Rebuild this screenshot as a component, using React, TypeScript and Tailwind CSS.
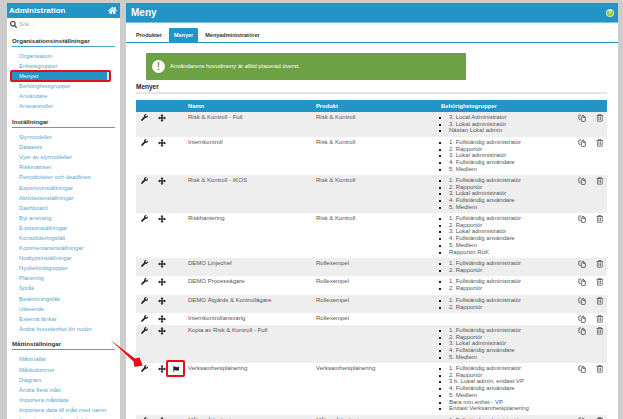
import { FaFlag, FaHome, FaRegTrashAlt, FaSearch, FaWrench } from "react-icons/fa";

const sections = [
  {
    title: "Organisationsinställningar",
    items: ["Organisation", "Enhetsgrupper", "Menyer", "Behörighetsgrupper", "Användare", "Ansvarsroller"],
  },
  {
    title: "Inställningar",
    items: [
      "Styrmodeller",
      "Datasets",
      "Vyer av styrmodeller",
      "Riskmatriser",
      "Periodiciteter och deadlines",
      "Exportvyinställningar",
      "Aktivitetsinställningar",
      "Dashboard",
      "Byt ansvarig",
      "E-postinställningar",
      "Konsolideringsfält",
      "Kommentarsinställningar",
      "Nodtypsinställningar",
      "Nyckelordsgrupper",
      "Planering",
      "Språk",
      "Beskrivningsfält",
      "Utseende",
      "Externa länkar",
      "Ändra huvudenhet för noder",
    ],
  },
  {
    title: "Måttinställningar",
    items: [
      "Måttmallar",
      "Måttkolumner",
      "Diagram",
      "Ändra flera mått",
      "Importera måttdata",
      "Importera data till mått med namn",
      "Importera periodiserad data",
    ],
  },
];

const five = [
  "1. Fullständig administratör",
  "2. Rapportör",
  "3. Lokal administratör",
  "4. Fullständig användare",
  "5. Medlem",
];
const two = ["1. Fullständig administratör", "2. Rapportör"];

const rows = [
  { name: "Risk & Kontroll - Full", product: "Risk & Kontroll", groups: ["3. Local Administrator", "3. Lokal administratör", "Nästan Lokal admin"], h: "h-[25px]" },
  { name: "Internkontroll", product: "Risk & Kontroll", groups: five, h: "h-[38px]" },
  { name: "Risk & Kontroll - IKOS", product: "Risk & Kontroll", groups: five, h: "h-[38px]" },
  { name: "Riskhantering", product: "Risk & Kontroll", groups: [...five, "Rapportör RoK"], h: "h-[45px]" },
  { name: "DEMO Linjechef", product: "Rollexempel", groups: two, h: "h-[18px]" },
  { name: "DEMO Processägare", product: "Rollexempel", groups: two, h: "h-[19px]" },
  { name: "DEMO Åtgärds & Kontrollägare", product: "Rollexempel", groups: two, h: "h-[18px]" },
  { name: "Internkontrollansvarig", product: "Rollexempel", groups: [], h: "h-[12px]" },
  { name: "Kopia av Risk & Kontroll - Full", product: "", groups: five, h: "h-[38px]" },
  {
    name: "Verksamhetsplanering",
    product: "Verksamhetsplanering",
    groups: ["1. Fullständig administratör", "2. Rapportör", "3 b. Lokal admin, endast VP", "4. Fullständig användare", "5. Medlem", "Bara min enhet - VP", "Endast Verksamhetsplanering"],
    h: "h-[52px]",
    flag: true,
  },
  { name: "Målområdeskarta", product: "Målområdeskarta", groups: ["1. Fullständig administratör"], h: "h-[18px]" },
];

function MoveIcon() {
  return (
    <svg width="8" height="8" viewBox="0 0 8 8" className="shrink-0" fill="#111">
      <path d="M3.4 1.5h1.2v5H3.4z" />
      <path d="M1.5 3.4h5v1.2h-5z" />
      <path d="M4 0l1.5 1.8h-3zM4 8L2.5 6.2h3zM0 4l1.8-1.5v3zM8 4L6.2 5.5v-3z" />
    </svg>
  );
}

function CopyIcon() {
  return (
    <svg width="8" height="8" viewBox="0 0 8 8" fill="none" stroke="#444" strokeWidth="0.8">
      <path d="M3.2 1H1.4a.6.6 0 0 0-.6.6v3.2a.6.6 0 0 0 .6.6h1" />
      <path d="M3.3 3.2L4.9 1.2h.5l1.9 2v3.6a.6.6 0 0 1-.6.6H3.9a.6.6 0 0 1-.6-.6z" />
      <path d="M5 1.4v2h2" />
    </svg>
  );
}

function Sidebar() {
  return (
    <aside className="w-[113px] shrink-0 bg-white h-full overflow-hidden">
      <div className="h-[15px] bg-[#2394c6] flex items-center justify-between pl-[2px] pr-[3px] text-white">
        <span className="text-[8px] font-bold">Administration</span>
        <FaHome className="text-[9px]" />
      </div>
      <div className="h-[11px] mt-[1px] flex items-center gap-[2px] pl-[3px] text-[6px] text-[#aaa]">
        <FaSearch className="text-[7px] text-[#333]" />
        <span>Sök...</span>
      </div>
      {sections.map((section, i) => (
        <div key={section.title} className={i === 0 ? "mt-[6px]" : "mt-[5.5px]"}>
          <div className="mx-[5px] pb-[1px] border-b border-[#4ba3cf] text-[6.15px] leading-[9px] font-bold text-[#333]">
            {section.title}
          </div>
          <ul className="mt-[4px]">
            {section.items.map((item) => (
              <li
                key={item}
                className={`h-[10.1px] pl-[8px] ml-[4px] w-[98px] text-[5.85px] leading-[10px] whitespace-nowrap ${
                  item === "Menyer" ? "bg-[#2394c6] text-white border-r-2 border-[#cfe6f2]" : "text-[#5aa5cf]"
                }`}
              >
                {item}
              </li>
            ))}
          </ul>
        </div>
      ))}
    </aside>
  );
}

function MenuRow({ row, shaded }: { row: (typeof rows)[number]; shaded: boolean }) {
  return (
    <div className={`${row.h} shrink-0 grid grid-cols-[52px_128px_125px_137px_18px_1fr] pt-[2px] text-[6px] leading-[6.7px] text-[#555] ${shaded ? "bg-[#eeeeee]" : "bg-white"}`}>
      <div className="flex items-start pl-[5px] text-[#222]">
        <FaWrench className="text-[7px] shrink-0" />
        <div className="ml-[10px]">
          <MoveIcon />
        </div>
        {row.flag && <FaFlag className="text-[6px] ml-[7px] mt-[1px] shrink-0" />}
      </div>
      <div className="whitespace-nowrap">{row.name}</div>
      <div className="whitespace-nowrap">{row.product}</div>
      <ul className="list-[square] pl-[8px] whitespace-nowrap marker:text-[#222]">
        {row.groups.map((group) => (
          <li key={group}>{group}</li>
        ))}
      </ul>
      <CopyIcon />
      <FaRegTrashAlt className="text-[7.5px] text-[#555]" />
    </div>
  );
}

export default function App() {
  return (
    <div className="relative h-[419px] w-[623px] overflow-hidden bg-[#cccccc] font-['Liberation_Sans',Arial,sans-serif]">
      <div className="flex h-full gap-[6px] pl-[7px] pr-[5px] pt-[3px]">
        <Sidebar />

        <main className="flex-1 bg-white h-full overflow-hidden">
          {/* Header */}
          <div className="h-[20px] bg-[#2394c6] border-b border-[#7cc4e4] flex items-center justify-between pl-[5px] pr-[4px]">
            <span className="text-[10px] font-bold text-white">Meny</span>
            <span className="w-[8px] h-[8px] rounded-full bg-[#8dc63f] border border-white/60 flex items-center justify-center text-white text-[6px] font-bold">?</span>
          </div>

          {/* Tabs */}
          <div className="h-[20px] border-b border-[#2394c6] flex items-end pl-[4px] text-[5.5px] font-bold text-[#333]">
            <div className="h-[14px] px-[6px] leading-[14px] mr-[1px]">Produkter</div>
            <div className="h-[14px] px-[5px] leading-[14px] bg-[#2394c6] text-white rounded-t-[1px]">Menyer</div>
            <div className="h-[14px] px-[7px] leading-[14px]">Menyadministratörer</div>
          </div>

          {/* Alert */}
          <div className="mt-[10px] ml-[20px] w-[320px] h-[27px] bg-[#6da244] rounded-[1px] flex items-center pl-[6px] gap-[5px] text-[5.85px] text-white">
            <span className="w-[13px] h-[13px] rounded-full bg-white text-[#6da244] flex items-center justify-center text-[10px] font-bold">!</span>
            <span>Användarens huvudmeny är alltid placerad överst.</span>
          </div>

          <div className="mt-[3px] ml-[10px] mr-[11px] h-[11px] border-b-2 border-[#e5e5e5] text-[6.5px] leading-[8px] font-bold text-[#222]">
            Menyer
          </div>

          {/* Table */}
          <div className="mt-[6px] ml-[10px] w-[471px] flex flex-col">
            <div className="h-[12px] bg-[#2394c6] grid grid-cols-[52px_128px_125px_1fr] items-center text-[5.8px] font-bold text-white">
              <div />
              <div>Namn</div>
              <div>Produkt</div>
              <div>Behörighetsgrupper</div>
            </div>
            {rows.map((row, i) => (
              <MenuRow key={row.name} row={row} shaded={i % 2 === 0} />
            ))}
          </div>
        </main>
      </div>

      {/* Red annotations */}
      <div className="absolute left-[10px] top-[70px] w-[101px] h-[12px] border-2 border-[#e3101a] rounded-[2px]" />
      <div className="absolute left-[166px] top-[360px] w-[19px] h-[17px] border-2 border-[#e3101a] rounded-[2px]" />
      <svg className="absolute left-[108px] top-[338px]" width="36" height="32" viewBox="0 0 36 32">
        <path d="M2.5 2 L27 20.5 L31.5 19.5 L34.7 27.5 L26.5 29 L25.5 23.5 Z" fill="#e3101a" />
      </svg>
    </div>
  );
}
